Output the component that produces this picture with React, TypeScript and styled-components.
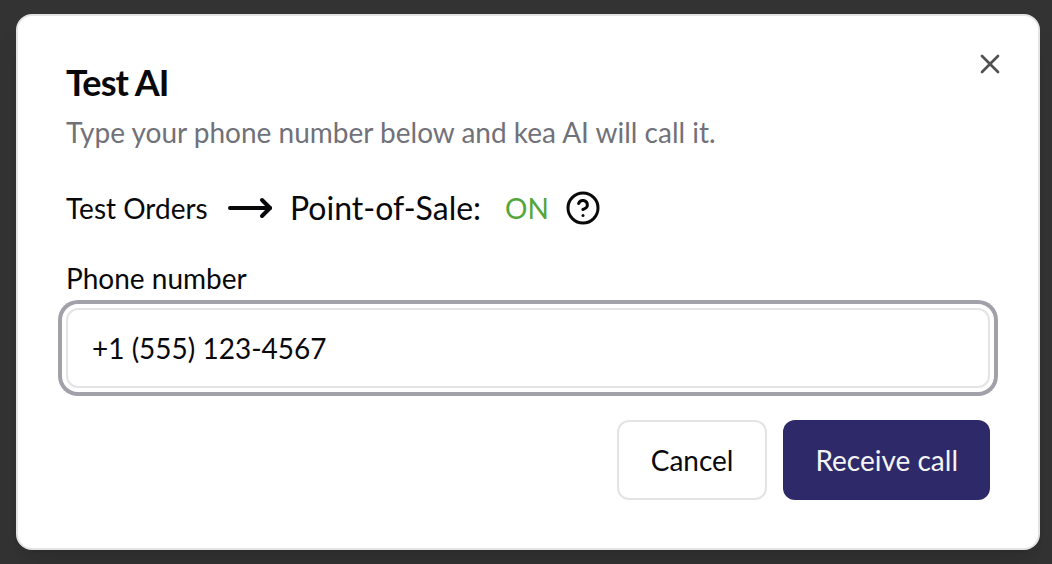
import React, { useState } from "react";
import styled, { createGlobalStyle } from "styled-components";
import { CircleHelp, MoveRight, X } from "lucide-react";

const GlobalStyle = createGlobalStyle`
  *, *::before, *::after { box-sizing: border-box; }
  body {
    margin: 0;
    background: #333333;
    color: #09090b;
    font-family: Lato, "Liberation Sans", sans-serif;
    font-size: 28px;
    line-height: 40px;
    -webkit-font-smoothing: antialiased;
  }
`;

const Overlay = styled.main`
  padding: 14px 12px 14px 16px;
`;

const Dialog = styled.section`
  position: relative;
  display: flex;
  flex-direction: column;
  gap: 32px;
  padding: 48px;
  border: 2px solid #e4e4e7;
  border-radius: 16px;
  background: #ffffff;
  box-shadow: 0 20px 30px -6px rgba(0, 0, 0, 0.1), 0 8px 12px -8px rgba(0, 0, 0, 0.1);
`;

const Header = styled.header`
  display: flex;
  flex-direction: column;
  gap: 12px;
`;

const Title = styled.h1`
  margin: 0;
  font-size: 36px;
  font-weight: 700;
  line-height: 36px;
  letter-spacing: -0.025em;
`;

const Description = styled.p`
  margin: 0;
  color: #71717a;
`;

const StatusRow = styled.div`
  display: flex;
  align-items: center;
  gap: 16px;
  line-height: 48px;

  svg {
    flex: none;
  }
`;

const Source = styled.span`
  min-width: 144px;
`;

const Destination = styled.span`
  font-size: 32px;
`;

const Status = styled.span`
  margin-left: 8px;
  color: #53a63b;
`;

const IconButton = styled.button`
  display: flex;
  padding: 0;
  border: 0;
  background: none;
  color: inherit;
  cursor: pointer;
`;

const CloseButton = styled(IconButton)`
  position: absolute;
  top: 32px;
  right: 32px;
  opacity: 0.7;
`;

const Form = styled.form`
  display: flex;
  flex-direction: column;
  gap: 32px;
`;

const Field = styled.div`
  display: flex;
  flex-direction: column;
  gap: 16px;
`;

const Label = styled.label`
  line-height: 28px;
`;

const PhoneInput = styled.input`
  width: 100%;
  height: 80px;
  padding: 0 24px;
  border: 2px solid #e4e4e7;
  border-radius: 12px;
  outline: none;
  background: #ffffff;
  box-shadow: 0 0 0 4px #ffffff, 0 0 0 8px #a1a1aa;
  color: inherit;
  font: inherit;
`;

const Footer = styled.footer`
  display: flex;
  justify-content: flex-end;
  gap: 16px;
`;

const Button = styled.button<{ $primary?: boolean }>`
  height: 80px;
  padding: 0 32px;
  border: ${(p) => (p.$primary ? "0" : "2px solid #e4e4e7")};
  border-radius: 12px;
  background: ${(p) => (p.$primary ? "#2e2a69" : "#ffffff")};
  color: ${(p) => (p.$primary ? "#f4f4f5" : "#09090b")};
  font: inherit;
  cursor: pointer;
`;

export default function App() {
  const [phone, setPhone] = useState("+1 (555) 123-4567");

  return (
    <>
      <GlobalStyle />
      <Overlay>
        <Dialog role="dialog" aria-labelledby="dialog-title" aria-describedby="dialog-description">
          <Header>
            <Title id="dialog-title">Test AI</Title>
            <Description id="dialog-description">
              Type your phone number below and kea AI will call it.
            </Description>
          </Header>
          <StatusRow>
            <Source>Test Orders</Source>
            <MoveRight size={48} aria-hidden />
            <Destination>Point-of-Sale:</Destination>
            <Status>ON</Status>
            <IconButton type="button" aria-label="About test orders">
              <CircleHelp size={36} />
            </IconButton>
          </StatusRow>
          <Form onSubmit={(event) => event.preventDefault()}>
            <Field>
              <Label htmlFor="phone">Phone number</Label>
              <PhoneInput
                id="phone"
                type="tel"
                value={phone}
                onChange={(event) => setPhone(event.target.value)}
              />
            </Field>
            <Footer>
              <Button type="button">Cancel</Button>
              <Button type="submit" $primary>
                Receive call
              </Button>
            </Footer>
          </Form>
          <CloseButton type="button" aria-label="Close">
            <X size={32} />
          </CloseButton>
        </Dialog>
      </Overlay>
    </>
  );
}
